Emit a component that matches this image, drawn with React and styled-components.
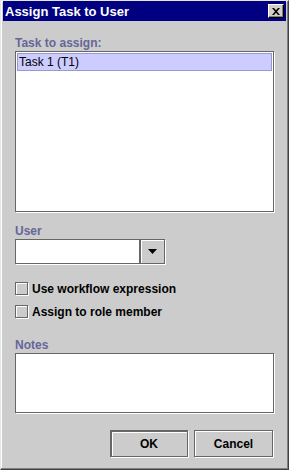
import styled, { createGlobalStyle } from 'styled-components';

const Global = createGlobalStyle`
    html, body {
        margin: 0;
        padding: 0;
        background: #cccccc;
    }
    body {
        font-family: "Liberation Sans", Arial, sans-serif;
        font-size: 12px;
    }
`

const App = () => {
    return (
        <>
            <Global />
            <Frame>
                <TitleBar>
                    <Title>Assign Task to User</Title>
                    <CloseButton aria-label="Close">
                        <svg width="8" height="7" viewBox="0 0 8 7">
                            <path d="M0 0h2l2 2.3L6 0h2L5 3.5 8 7H6L4 4.7 2 7H0l3-3.5z" fill="#000" />
                        </svg>
                    </CloseButton>
                </TitleBar>
                <Body>
                    <Label>Task to assign:</Label>
                    <ListBox>
                        <ListItem selected>Task 1 (T1)</ListItem>
                    </ListBox>

                    <Label $top={12}>User</Label>
                    <Combo>
                        <ComboField />
                        <ComboButton>
                            <svg width="9" height="5" viewBox="0 0 9 5">
                                <path d="M0 0h9L4.5 5z" fill="#000" />
                            </svg>
                        </ComboButton>
                    </Combo>

                    <Checks>
                        <CheckRow>
                            <CheckBox />
                            <CheckText>Use workflow expression</CheckText>
                        </CheckRow>
                        <CheckRow>
                            <CheckBox />
                            <CheckText>Assign to role member</CheckText>
                        </CheckRow>
                    </Checks>

                    <Label $top={20}>Notes</Label>
                    <NotesArea />

                    <Buttons>
                        <Button $focused>OK</Button>
                        <Button>Cancel</Button>
                    </Buttons>
                </Body>
            </Frame>
        </>
    )
}

export default App;


const Frame = styled.div`
    box-sizing: border-box;
    width: 289px;
    height: 470px;
    background: #cccccc;
    border-top: 1px solid #e6e6e6;
    border-left: 1px solid #e6e6e6;
    border-right: 1px solid #404040;
    border-bottom: 1px solid #404040;
    box-shadow: inset -1px -1px 0 #808080, inset 1px 1px 0 #ffffff;
    padding: 0 2px;
    display: flex;
    flex-direction: column;
`

const TitleBar = styled.div`
    height: 20px;
    background: #000080;
    display: flex;
    align-items: center;
    justify-content: space-between;
    padding: 0 2px 0 2px;
`

const Title = styled.span`
    color: #ffffff;
    font-weight: bold;
    font-size: 13px;
`

const CloseButton = styled.div`
    box-sizing: border-box;
    width: 16px;
    height: 14px;
    background: #d4d0c8;
    border-top: 1px solid #ffffff;
    border-left: 1px solid #ffffff;
    border-right: 1px solid #000000;
    border-bottom: 1px solid #000000;
    box-shadow: inset -1px -1px 0 #808080;
    display: flex;
    align-items: center;
    justify-content: center;
`

const Body = styled.div`
    flex: 1;
    display: flex;
    flex-direction: column;
    padding: 15px 12px 0 12px;
`

const Label = styled.div`
    color: #666699;
    font-weight: bold;
    font-size: 12px;
    line-height: 15px;
    margin-top: ${p => p.$top || 0}px;
`

const sunken = `
    box-sizing: border-box;
    background: #ffffff;
    border: 1px solid #666666;
    box-shadow: 1px 1px 0 #ffffff;
`

const ListBox = styled.div`
    ${sunken}
    height: 161px;
    width: 259px;
    padding: 1px;
`

const ListItem = styled.div`
    height: 18px;
    box-sizing: border-box;
    padding-left: 1px;
    line-height: 16px;
    color: #000000;
    font-size: 12px;
    background: ${p => p.selected ? '#ccccff' : 'transparent'};
    border: 1px solid ${p => p.selected ? '#9999cc' : 'transparent'};
`

const Combo = styled.div`
    display: flex;
    height: 25px;
    width: 150px;
`

const ComboField = styled.div`
    ${sunken}
    width: 125px;
    height: 25px;
`

const ComboButton = styled.div`
    box-sizing: border-box;
    width: 25px;
    height: 25px;
    background: #cccccc;
    border: 1px solid #666666;
    box-shadow: 1px 1px 0 #ffffff, inset 1px 1px 0 #ffffff;
    display: flex;
    align-items: center;
    justify-content: center;
`

const Checks = styled.div`
    display: flex;
    flex-direction: column;
    gap: 10px;
    margin-top: 18px;
`

const CheckRow = styled.div`
    display: flex;
    align-items: center;
    gap: 4px;
    height: 13px;
`

const CheckBox = styled.div`
    box-sizing: border-box;
    width: 13px;
    height: 13px;
    background: #cccccc;
    border: 1px solid #666666;
    box-shadow: 1px 1px 0 #ffffff, inset 1px 1px 0 #ffffff;
`

const CheckText = styled.span`
    font-weight: bold;
    font-size: 12px;
    color: #000000;
`

const NotesArea = styled.div`
    ${sunken}
    width: 259px;
    height: 60px;
`

const Buttons = styled.div`
    display: flex;
    justify-content: flex-end;
    gap: 6px;
    margin-top: 17px;
    padding-right: 1px;
`

const Button = styled.div`
    box-sizing: border-box;
    width: ${p => p.$focused ? 78 : 79}px;
    height: 27px;
    display: flex;
    align-items: center;
    justify-content: center;
    font-weight: bold;
    font-size: 12px;
    color: #000000;
    background: #cccccc;
    border: 1px solid #666666;
    box-shadow: ${p => p.$focused
        ? '1px 1px 0 #ffffff, inset 1px 1px 0 #666666, inset 2px 2px 0 #ffffff'
        : '1px 1px 0 #ffffff, inset 1px 1px 0 #ffffff'};
`
